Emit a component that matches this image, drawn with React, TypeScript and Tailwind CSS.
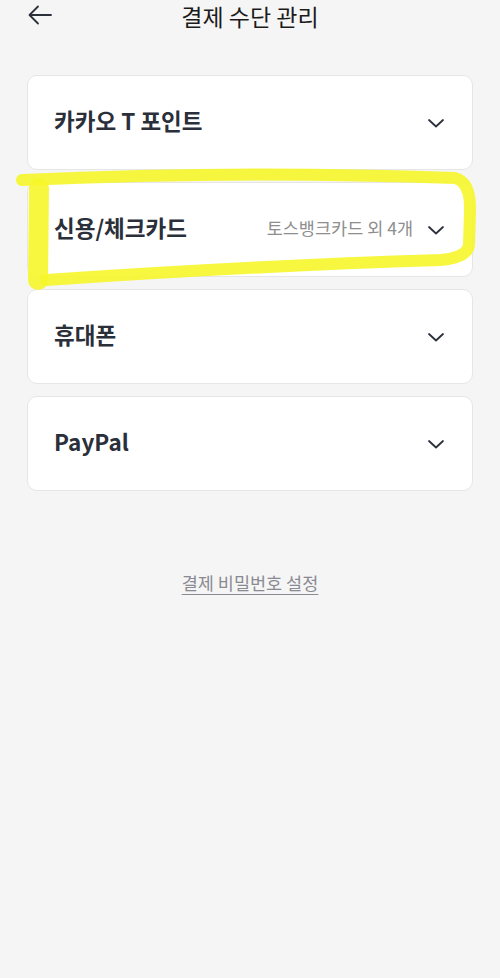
import React from "react";

const font = { fontFamily: '"Noto Sans CJK KR", "Noto Sans", sans-serif' };

const Chevron = () => (
  <svg width="18" height="18" viewBox="0 0 18 18" fill="none" className="shrink-0">
    <path d="M2 6 L9 12.5 L16 6" stroke="#2b303b" strokeWidth="1.8" strokeLinecap="round" strokeLinejoin="round" />
  </svg>
);

const methods = [
  { name: "카카오 T 포인트", sub: "" },
  { name: "신용/체크카드", sub: "토스뱅크카드 외 4개" },
  { name: "휴대폰", sub: "" },
  { name: "PayPal", sub: "" },
];

const App = () => {
  return (
    <div className="relative min-h-[978px] w-[500px] bg-[#f5f5f5]" style={font}>
      <div className="relative flex h-[33px] items-start justify-center">
        <button className="absolute left-[27px] top-[3px]">
          <svg width="26" height="24" viewBox="0 0 26 24" fill="none">
            <path d="M24 12 H3 M11 3.5 L2.5 12 L11 20.5" stroke="#2b303b" strokeWidth="1.8" strokeLinecap="round" strokeLinejoin="round" />
          </svg>
        </button>
        <h1 className="text-[23px] leading-[33px] text-[#1b1b1b]">결제 수단 관리</h1>
      </div>

      <div className="mt-[42px] flex flex-col gap-[12px] px-[27px]">
        {methods.map((m) => (
          <div
            key={m.name}
            className="flex h-[95px] items-center rounded-[10px] border border-[#e6e6e6] bg-white pl-[26px] pr-[27px]"
          >
            <span className="mb-[5px] text-[22.5px] leading-none font-bold text-[#2a2f3a]">{m.name}</span>
            <span className="mb-[3px] ml-auto mr-[14px] text-[17.5px] leading-none text-[#8e8e8e]">{m.sub}</span>
            <Chevron />
          </div>
        ))}
      </div>

      <div className="mt-[83px] flex justify-center">
        <a className="text-[17.5px] leading-none text-[#8a8a92] underline underline-offset-[4px]">결제 비밀번호 설정</a>
      </div>

      <svg className="pointer-events-none absolute left-0 top-0" width="500" height="300" viewBox="0 0 500 300" fill="none">
        <path
          d="M22 180 Q 240 170 455 178 Q 471 182 470 212 L 469 245 Q 467 258 440 260 Q 250 266 46 280"
          stroke="#f6f62a"
          strokeOpacity="0.9"
          strokeWidth="12"
          strokeLinecap="round"
          strokeLinejoin="round"
        />
        <path d="M39 188 L 38 280" stroke="#f6f62a" strokeOpacity="0.9" strokeWidth="20" strokeLinecap="round" />
      </svg>
    </div>
  );
};

export default App;
